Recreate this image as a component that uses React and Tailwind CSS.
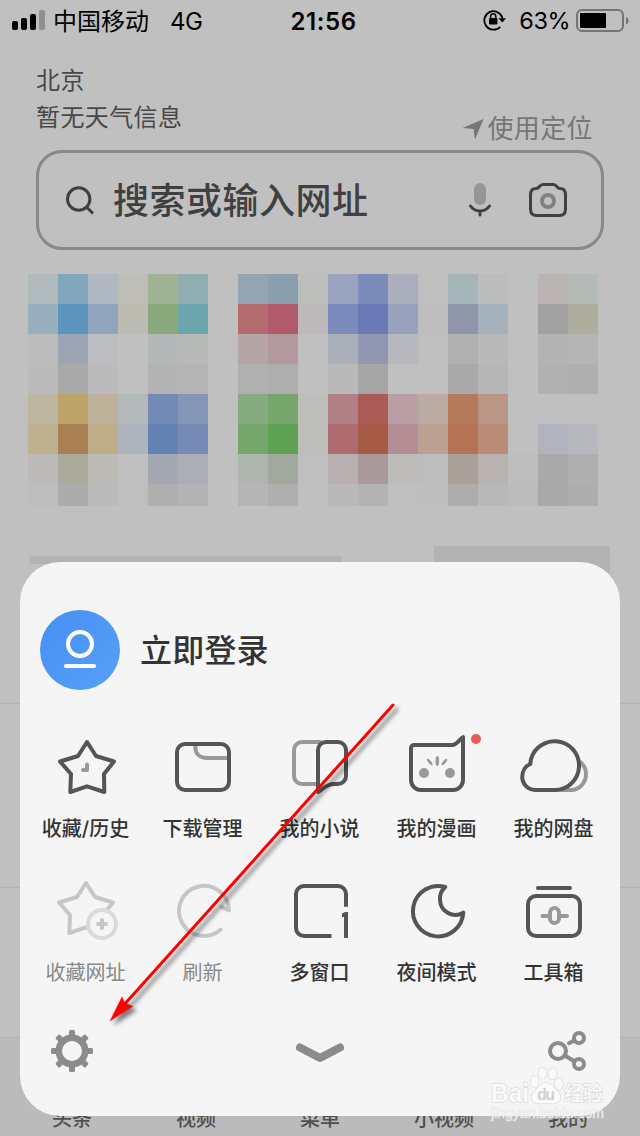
import React from 'react';

// One entry per row of blurred shortcut tiles, 19 columns each
const TILE_ROWS = [
  '#b1bbbe #82a7bd #b0b8c1 #bebeb6 #a0b394 #90adb2 #c0c0c0 #94a5b1 #8b9fae #bdbfbd #99a2be #7b8cba #abaebd #bfbfbf #a6b5ba #babdbb #c0c0c0 #bab4b3 #b4bab5',
  '#9aafbd #5d94bd #91a5be #bdbcb3 #89a87c #6ba5ae #c0c0c0 #b36b6f #b05b6c #bebabb #7b8bbc #6b7ab6 #98a1bd #bebebe #8f96a9 #a5b2bb #c0c0c0 #a1a1a1 #afad9e',
  '#bcbcbc #9ba5b3 #bcbdc0 #c0c0c0 #b3b9b9 #b8bab8 #c0c0c0 #b4a4a3 #b1999e #bfbfbf #abafba #9197b0 #b7b8be #bfbfbf #b0b0b0 #b9b9b9 #c0c0c0 #b3b3b3 #b5b5b5',
  '#bbbbbb #a9a9a9 #bbbbbb #c0c0c0 #b3b3b3 #b4b4b4 #c0c0c0 #b0b0b0 #aeaeae #c0c0c0 #b9b9b9 #a6a6a6 #c0c0c0 #c0c0c0 #a9a9a9 #b6b6b6 #c0c0c0 #b1b1b1 #afafaf',
  '#bdb6a0 #bba369 #beb19b #b4b9bc #718bb6 #8597b7 #c0c0c0 #86ab80 #76a66c #bdbdba #b18087 #aa5b56 #b99fa3 #bbaca3 #b47a5b #ba9686 #c0c0c0 #c0c0c0 #c0c0c0',
  '#bdb08f #a98054 #bdad88 #afb3bd #6483b3 #758bb5 #c0c0c0 #76a66c #5ea153 #bdbdba #ae6b70 #a55b46 #b58d94 #bba192 #b37354 #ba8b76 #c0c0c0 #b1b4bf #b8b9be',
  '#bbbab8 #abab9d #bbbab5 #bfbfbf #a3a8b1 #abaeb4 #c0c0c0 #afb6ae #a1a99f #bfbfbf #b8b0b0 #a9999b #bebbbb #bdbdbd #aa9f99 #b8b3af #bdbdbe #a9a9a9 #afafaf',
  '#bdbdbd #acacac #bababa #bfbfbf #afafaf #b3b3b3 #c0c0c0 #b5b5b5 #afafaf #c0c0c0 #b9b9b9 #b3b3b3 #c0c0c0 #bebebe #adadad #b8b8b8 #bcbcbc #a9a9a9 #adadad',
].map((row) => row.split(' '));

const TABS = ['头条', '视频', '菜单', '小视频', '我的'];

const STAR = '37,11 46,25 64,30.5 54,43 54.3,61 37,55.3 20.3,61 21,43 10,30.5 28,25';

const StarIcon = () => (
  <>
    <polygon points={STAR} />
    <path d="M37 33.5V39H33" stroke="#999" />
  </>
);

const DownloadIcon = () => (
  <>
    <path d="M28.3 14V16C28.3 23 33 27 40 27H61" stroke="#999" />
    <rect x="10" y="13" width="52" height="46" rx="8" />
  </>
);

const NovelIcon = () => (
  <>
    <path d="M36 11H18A8 8 0 0 0 10 19V45A8 8 0 0 0 18 53H34" stroke="#999" />
    <path d="M34 61V19A8 8 0 0 1 42 11H54A8 8 0 0 1 62 19V45A8 8 0 0 1 54 53H50C42 53 39 58 34 61Z" />
  </>
);

const ComicIcon = () => (
  <>
    <path d="M13 14H51C56 14 58 9 62 6V49A10 10 0 0 1 52 59H20A10 10 0 0 1 10 49V17A3 3 0 0 1 13 14Z" />
    <g fill="#999" stroke="none">
      <circle cx="23" cy="42" r="5" />
      <circle cx="49" cy="42" r="5" />
      <ellipse cx="36.3" cy="30" rx="1.8" ry="5" />
      <ellipse cx="28.8" cy="31" rx="1.4" ry="4" transform="rotate(-40 28.8 31)" />
      <ellipse cx="43.4" cy="31" rx="1.4" ry="4" transform="rotate(40 43.4 31)" />
    </g>
    <circle cx="75" cy="8" r="5" fill="#e75c54" stroke="none" />
  </>
);

const CloudIcon = () => (
  <>
    <path d="M61 30C65 33 68 37 68 43C68 52 61 59 53 59H44" stroke="#999" />
    <path d="M12.3 33A24.4 24.4 0 1 1 36 59H17.3A13.2 13.2 0 0 1 4.2 46C4.2 40 7.5 35 12.3 33Z" />
  </>
);

const AddStarIcon = () => (
  <>
    <polygon points={STAR} transform="translate(-1 -3)" />
    <circle cx="52" cy="49" r="14" fill="#f5f5f5" stroke="#dadada" />
    <path d="M48 49H56M52 45V53" />
  </>
);

const RefreshIcon = () => (
  <path d="M53.7 54.5A25 25 0 1 1 62 35.5L54.5 32" />
);

const WindowsIcon = () => (
  <>
    <path d="M62 31.7V19A8 8 0 0 0 54 11H20A8 8 0 0 0 12 19V53A8 8 0 0 0 20 61H47.5" strokeLinecap="butt" />
    <path d="M64 63H60V42H58V38.5L61 37H64Z" fill="#555" stroke="none" />
  </>
);

const MoonIcon = () => (
  <path d="M62.3 37.7A25.2 25.2 0 1 1 44.3 12A15.5 15.5 0 0 0 39 25A15.5 15.5 0 0 0 62.3 37.7Z" />
);

const ToolboxIcon = () => (
  <>
    <path d="M20 13H52" />
    <rect x="10" y="21" width="52" height="40" rx="8" />
    <rect x="32" y="33" width="9" height="15" rx="4.5" stroke="#999" />
    <path d="M24.5 41H31M42 41H49" stroke="#999" />
  </>
);

const MENU = [
  { label: '收藏/历史', Icon: StarIcon },
  { label: '下载管理', Icon: DownloadIcon },
  { label: '我的小说', Icon: NovelIcon },
  { label: '我的漫画', Icon: ComicIcon },
  { label: '我的网盘', Icon: CloudIcon },
  { label: '收藏网址', Icon: AddStarIcon, disabled: true },
  { label: '刷新', Icon: RefreshIcon, disabled: true },
  { label: '多窗口', Icon: WindowsIcon },
  { label: '夜间模式', Icon: MoonIcon },
  { label: '工具箱', Icon: ToolboxIcon },
];

const StatusBar = () => (
  <div className="grid h-10 grid-cols-[1fr_auto_1fr] items-center pr-[11px] pl-3 text-[24px] text-black">
    <div className="flex items-center">
      <svg width="33" height="20" viewBox="0 0 33 20" className="mr-2">
        <rect x="0" y="11" width="6" height="9" rx="2" />
        <rect x="9" y="8" width="6" height="12" rx="2" />
        <rect x="18" y="4" width="6" height="16" rx="2" />
        <rect x="27" y="0" width="6" height="20" rx="2" fill="#8f8f8f" />
      </svg>
      <span className="pt-[3px] leading-[37px]">中国移动</span>
      <span className="ml-[21px] pt-[3px] tracking-[-0.5px]">4G</span>
    </div>
    <span className="pt-[3px] pl-[6px] font-semibold tracking-[0.6px]">21:56</span>
    <div className="flex items-center justify-end">
      <svg width="24" height="22" viewBox="0 0 24 22" className="mr-[12px]">
        <path d="M17.2 17.8A9.2 9.2 0 1 1 19.4 9" fill="none" stroke="#000" strokeWidth="1.8" />
        <path d="M15.5 9.2H23L19.2 13.6Z" />
        <rect x="6" y="9" width="8.4" height="6.5" rx="1" />
        <path d="M7.6 9.5V7.3A2.6 2.6 0 0 1 12.8 7.3V9.5" fill="none" stroke="#000" strokeWidth="1.5" />
      </svg>
      <span className="mr-[6px] pt-[2px] text-[23.5px] tracking-[-0.5px]">63%</span>
      <svg width="53" height="24" viewBox="0 0 53 24" className="mt-px">
        <rect x="1" y="1" width="46" height="21" rx="5" fill="none" stroke="#747474" strokeWidth="2" />
        <rect x="4" y="4" width="26" height="15" rx="1" />
        <path d="M50 8C53.5 9.5 53.5 14 50 15.5Z" fill="#747474" />
      </svg>
    </div>
  </div>
);

const SearchBox = () => (
  <div className="mx-9 mt-1 flex h-[100px] items-center rounded-[26px] border-[3px] border-[#87888c] pr-[34px] pl-[27px]">
    <svg width="29" height="29" viewBox="0 0 29 29" fill="none" stroke="#404040" strokeWidth="3">
      <circle cx="12.7" cy="13" r="11.2" />
      <path d="M20.5 21L27 27.5" />
    </svg>
    <span className="ml-[18px] flex-1 pt-[2px] text-[36px] leading-none font-medium tracking-[0.5px] text-[#404040]">搜索或输入网址</span>
    <svg width="24" height="34" viewBox="0 0 24 34" fill="none" stroke="#404040" strokeWidth="3" strokeLinecap="round">
      <rect x="6" y="0" width="12" height="22" rx="6" fill="#969696" stroke="none" />
      <path d="M2.5 23C7 29.5 17 29.5 21.5 23M12 28V32" />
    </svg>
    <svg width="38" height="34" viewBox="0 0 38 34" fill="none" stroke="#404040" strokeWidth="3" className="ml-[37px]">
      <path d="M7 5.5C11 5.5 10 1.5 14 1.5H24.5C28 1.5 27.5 5.5 31 5.5Q36.5 5.5 36.5 12V26Q36.5 32.5 30.5 32.5H7.5Q1.5 32.5 1.5 26V12Q1.5 5.5 7 5.5Z" />
      <circle cx="19" cy="18" r="6" stroke="#818181" strokeWidth="4" />
    </svg>
  </div>
);

const HomePage = () => (
  <div className="flex h-full flex-col">
    <StatusBar />
    <div className="flex h-[106px] justify-between pr-[47px] pl-9">
      <div className="pt-[22px] text-[24px] leading-[37px] tracking-[0.4px] text-[#484848]">
        <p>北京</p>
        <p>暂无天气信息</p>
      </div>
      <div className="flex items-center self-end text-[26px] leading-[34px] tracking-[0.4px] text-[#767676]">
        <svg width="22" height="21" viewBox="0 0 22 21" fill="#767676" className="mr-[3px]">
          <path d="M21.5 0L13 20.5L11.5 10L0.5 9Z" />
        </svg>
        使用定位
      </div>
    </div>
    <SearchBox />
    <div className="mt-6 ml-7 grid w-[570px] grid-cols-[repeat(19,30px)] grid-rows-[repeat(7,30px)_22px]">
      {TILE_ROWS.flat().map((color, i) => (
        <div key={i} style={{ backgroundColor: color }} />
      ))}
    </div>
    <div className="mt-10 flex items-start justify-between pr-[30px] pl-[30px]">
      <div className="mt-[10px] h-2 w-[312px] bg-[#b3b3b3]" />
      <div className="h-[27px] w-44 bg-[#b3b3b3]" />
    </div>
    <div className="mt-[130px] h-[184px] border-t border-[#b2b2b2]" />
    <div className="flex-1 border-t border-[#b2b2b2]" />
    <div className="flex h-[99px] items-end border-t border-[#b2b2b2] bg-[#bbb] px-[10px] pb-[3px] text-[20px] font-medium text-[#505050]">
      {TABS.map((tab) => (
        <span key={tab} className="flex-1 text-center leading-7">{tab}</span>
      ))}
    </div>
  </div>
);

const MenuItem = ({ label, Icon, disabled }) => (
  <div className="flex h-36 flex-col items-center">
    <svg
      width="72"
      height="72"
      viewBox="0 0 72 72"
      fill="none"
      stroke={disabled ? '#c6c6c6' : '#555'}
      strokeWidth="4"
      strokeLinecap="round"
      strokeLinejoin="round"
      className="overflow-visible"
    >
      <Icon />
    </svg>
    <span className={`mt-3 pr-px text-[20px] leading-[28px] whitespace-nowrap ${disabled ? 'text-[#888]' : 'font-medium text-[#333]'}`}>
      {label}
    </span>
  </div>
);

const MenuSheet = () => (
  <div className="absolute top-[562px] left-5 flex h-[554px] w-[600px] flex-col rounded-[40px] bg-[#f5f5f5]">
    <div className="flex items-center pt-12 pl-5">
      <div className="flex size-20 items-center justify-center rounded-full bg-gradient-to-br from-[#4690f5] to-[#599ff8]">
        <svg width="32" height="38" viewBox="0 0 32 38" fill="none" stroke="#fff" strokeWidth="4" strokeLinecap="round" className="overflow-visible">
          <circle cx="16" cy="13" r="12" />
          <path d="M2 35H30" />
        </svg>
      </div>
      <span className="ml-5 pt-[2px] text-[32px] leading-none font-medium tracking-[0.2px] text-[#333]">立即登录</span>
    </div>
    <div className="mx-auto mt-[41px] grid w-[585px] grid-cols-5">
      {MENU.map((item) => (
        <MenuItem key={item.label} {...item} />
      ))}
    </div>
    <div className="mt-[11px] grid grid-cols-3 items-center pr-[34px] pl-[31px]">
      <svg width="42" height="42" viewBox="-21 -21 42 42" fill="none" stroke="#8b8b8b">
        <circle r="13.2" strokeWidth="6.5" />
        {[0, 45, 90, 135, 180, 225, 270, 315].map((angle) => (
          <rect key={angle} x="-3" y="-21" width="6" height="8" rx="1.5" fill="#8b8b8b" stroke="none" transform={`rotate(${angle})`} />
        ))}
      </svg>
      <svg width="48" height="20" viewBox="0 0 48 20" fill="none" stroke="#8b8b8b" strokeWidth="8" strokeLinecap="round" strokeLinejoin="round" className="mt-1 ml-[67px]">
        <path d="M4 4.5L24 15L44 4.5" />
      </svg>
      <svg width="38" height="40" viewBox="0 0 38 40" fill="none" stroke="#8b8b8b" strokeWidth="4" strokeLinecap="round" className="-mt-px justify-self-end">
        <circle cx="10" cy="20" r="8" />
        <circle cx="31" cy="7" r="5" />
        <circle cx="31" cy="33" r="5" />
        <path d="M21 12.3L26 9.5M17.5 25L26 30" />
      </svg>
    </div>
  </div>
);

const Arrow = () => (
  <svg width="640" height="1136" viewBox="0 0 640 1136" className="pointer-events-none absolute inset-0 drop-shadow-[4px_4px_2px_rgba(0,0,0,0.5)]">
    <path d="M393 705L123 1006" stroke="#f00" strokeWidth="3" strokeLinecap="round" />
    <path d="M110 1021L122 997L125 1003.5L132.7 1006.3Z" fill="#f00" stroke="#f00" strokeWidth="0.5" />
  </svg>
);

const Watermark = () => (
  <svg width="120" height="60" viewBox="0 0 120 60" className="pointer-events-none absolute top-[1066px] left-[488px]">
    <g fill="#fafafa" stroke="#dcdcdc" strokeWidth="1.5" paintOrder="stroke" className="font-['Liberation_Sans','Noto_Sans_CJK_SC',sans-serif]">
      <text x="3" y="36" fontSize="26" fontWeight="700" textLength="38" lengthAdjust="spacingAndGlyphs">Bai</text>
      <ellipse cx="46.5" cy="15.5" rx="4" ry="5.5" />
      <ellipse cx="54.5" cy="7" rx="4" ry="5.5" />
      <ellipse cx="64.5" cy="8" rx="4" ry="5.5" transform="rotate(10 64.5 8)" />
      <ellipse cx="70.8" cy="18" rx="4" ry="5.5" />
      <path d="M58 17C64 17 66 22 70 26C75 31 72 38 65 37.5C60 37 56 37 51 37.5C44 38 41 31 46 26C50 22 52 17 58 17Z" />
      <text x="49" y="34" fontSize="16" fontWeight="700" fill="#d2d2d2" stroke="none" textLength="18">du</text>
      <text x="76" y="35" fontSize="20" fontWeight="500" textLength="39">经验</text>
      <text x="3" y="52" fontSize="14" fillOpacity="0.7" strokeOpacity="0.6" strokeWidth="1" textLength="113">jingyan.baidu.com</text>
    </g>
  </svg>
);

const App = () => (
  <div className="relative h-[1136px] w-[640px] overflow-hidden bg-[#c0c0c0] font-[Inter,'Noto_Sans_CJK_SC',sans-serif]">
    <HomePage />
    <MenuSheet />
    <Arrow />
    <Watermark />
  </div>
);

export default App;
